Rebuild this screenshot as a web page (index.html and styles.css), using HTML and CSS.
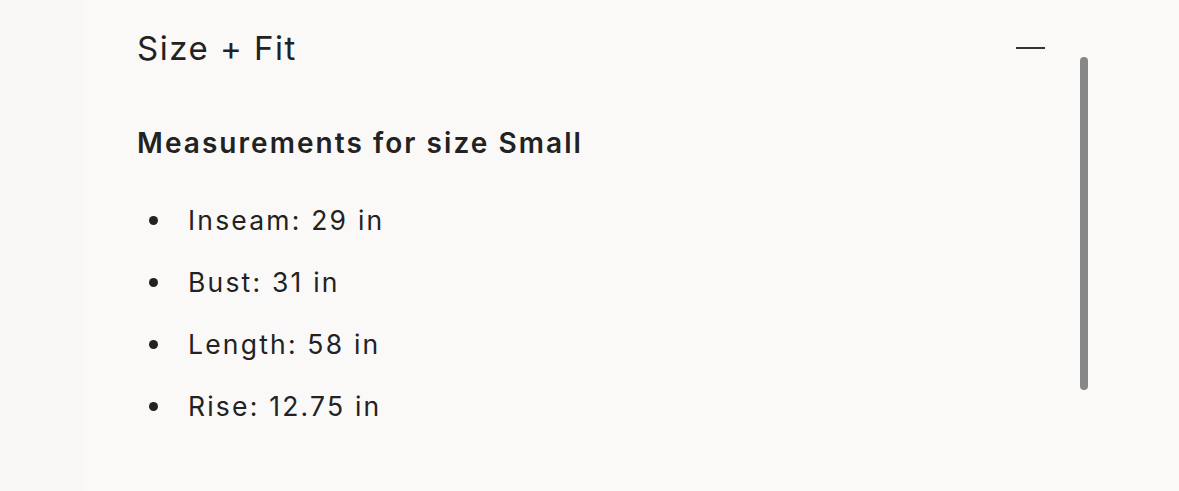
FILE: index.html
```html
<!DOCTYPE html>
<html>
<head>
<meta charset="utf-8">
<link rel="stylesheet" href="styles.css">
</head>
<body>
<div class="page">
  <div class="edge-left"></div>
  <section class="panel">
    <header class="panel-head">
      <h2 class="panel-title">Size + Fit</h2>
      <span class="toggle" aria-label="Collapse"></span>
    </header>
    <h3 class="measure-title">Measurements for size Small</h3>
    <ul class="measure-list">
      <li>Inseam: 29 in</li>
      <li>Bust: 31 in</li>
      <li>Length: 58 in</li>
      <li>Rise: 12.75 in</li>
    </ul>
    <div class="scrollbar"></div>
  </section>
</div>
</body>
</html>
```
FILE: styles.css
```css
html, body {
  margin: 0;
  padding: 0;
  background: #faf9f8;
}
body {
  font-family: Inter, "Open Sans", sans-serif;
  color: #222;
  width: 1179px;
  height: 491px;
  overflow: hidden;
}
.page {
  display: flex;
  height: 491px;
}
.edge-left {
  width: 85px;
  background: #f9f8f7;
}
.panel {
  position: relative;
  width: 960px;
  padding: 32px 0 0 52px;
  box-sizing: border-box;
}
.panel-head {
  display: flex;
  justify-content: space-between;
  align-items: flex-start;
  margin-bottom: 64px;
}
.panel-title {
  margin: 0;
  font-weight: 400;
  font-size: 33px;
  letter-spacing: 1.5px;
  line-height: 1;
  color: #222;
}
.toggle {
  width: 29px;
  height: 2px;
  margin-top: 15px;
  background: #333;
}
.measure-title {
  margin: 0;
  font-size: 28px;
  font-weight: 600;
  letter-spacing: 2.05px;
  line-height: 1;
  color: #222;
}
.measure-list {
  list-style: none;
  margin: 32px 0 0 0;
  padding: 0;
}
.measure-list li {
  display: flex;
  align-items: center;
  font-size: 26.5px;
  letter-spacing: 2.2px;
  line-height: 62px;
  height: 62px;
}
.measure-list li::before {
  content: "";
  width: 9px;
  height: 9px;
  border-radius: 50%;
  background: #222;
  margin-left: 12px;
  margin-right: 30px;
}
.scrollbar {
  position: absolute;
  top: 57px;
  left: 995px;
  width: 8px;
  height: 333px;
  border-radius: 4px;
  background: #878787;
}
```
